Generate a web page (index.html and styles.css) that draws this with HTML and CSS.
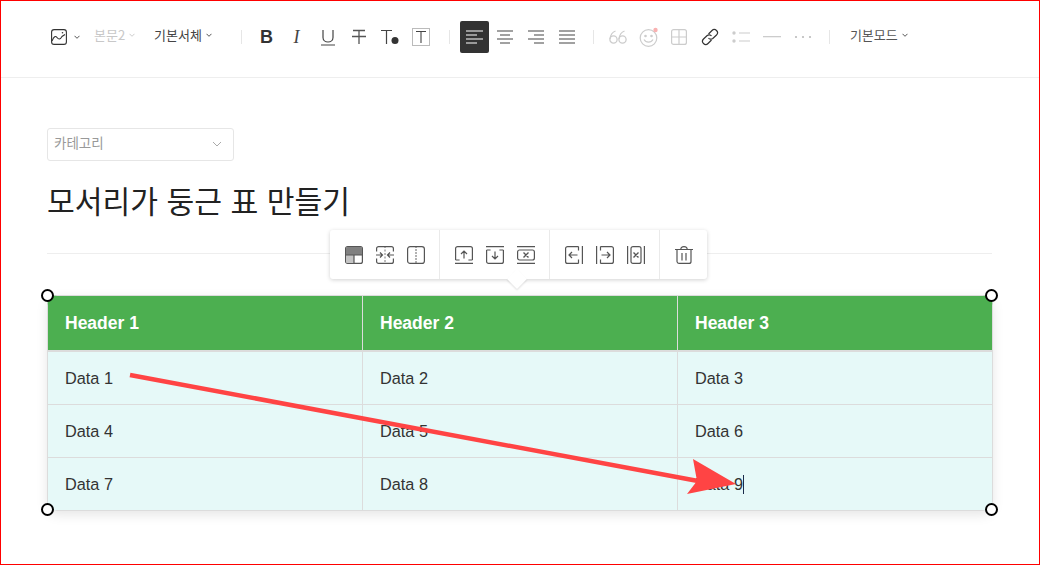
FILE: index.html
```html
<!DOCTYPE html>
<html lang="ko">
<head>
<meta charset="utf-8">
<title>모서리가 둥근 표 만들기</title>
<link rel="stylesheet" href="styles.css">
</head>
<body>
<div class="frame">
  <header class="toolbar">
    <div class="tb-image">
      <svg class="ic" width="16" height="16" viewBox="0 0 16 16" fill="none" stroke="#333" stroke-width="1.1"><rect x=".6" y=".6" width="14.8" height="14.8" rx="2.5"/><path d="M1 12c2-4.500 3.500-5.500 5-3.500s3 2.500 5-1l3-2"/><circle cx="11.500" cy="3.800" r=".8" fill="#333" stroke="none"/></svg>
      <svg class="chev" viewBox="0 0 6 4"><path d="M.5.800 3 3.300 5.500.800"/></svg>
    </div>
    <div class="tb-text muted">본문2<svg class="chev" viewBox="0 0 6 4"><path d="M.5.800 3 3.300 5.500.800"/></svg></div>
    <div class="tb-text font">기본서체<svg class="chev" viewBox="0 0 6 4"><path d="M.5.800 3 3.300 5.500.800"/></svg></div>
    <span class="sep sep-a"></span>
    <div class="tb-group format">
      <span class="btn bold"><b class="glyph-b">B</b></span>
      <span class="btn"><i class="glyph-i">I</i></span>
      <span class="btn"><svg width="16" height="18" viewBox="0 0 16 18" fill="none" stroke="#444" stroke-width="1.200"><path d="M3 2v7.500c0 6 10 6 10 0V2M1 17h14"/></svg></span>
      <span class="btn"><svg width="16" height="18" viewBox="0 0 16 18" fill="none" stroke="#555" stroke-width="1.300"><path d="M2 2.500h12M1 8.500h14M8 2.500V16"/></svg></span>
      <span class="btn"><svg width="20" height="18" viewBox="0 0 20 18" fill="none" stroke="#444" stroke-width="1.200"><path d="M1 2.500h11M6.500 2.500V16"/><circle cx="15" cy="12.500" r="3.500" fill="#333" stroke="none"/></svg></span>
      <span class="btn"><svg width="18" height="18" viewBox="0 0 18 18" fill="none"><rect x=".5" y=".5" width="17" height="17" stroke="#bbb"/><path d="M4 3.500h10M9 3.500V15" stroke="#444" stroke-width="1.100"/></svg></span>
    </div>
    <span class="sep sep-b"></span>
    <div class="tb-group align">
      <span class="btn active"><svg width="18" height="14" viewBox="0 0 18 14" stroke="#fff" stroke-width="1.200"><path d="M0 1h17M0 5h11M0 9h17M0 13h11"/></svg></span>
      <span class="btn"><svg width="18" height="14" viewBox="0 0 18 14" stroke="#444" stroke-width="1.200"><path d="M1 1h16M4 5h10M1 9h16M4 13h10"/></svg></span>
      <span class="btn"><svg width="18" height="14" viewBox="0 0 18 14" stroke="#444" stroke-width="1.200"><path d="M1 1h16M7 5h10M1 9h16M7 13h10"/></svg></span>
      <span class="btn"><svg width="18" height="14" viewBox="0 0 18 14" stroke="#444" stroke-width="1.200"><path d="M1 1h16M1 5h16M1 9h16M1 13h16"/></svg></span>
    </div>
    <span class="sep sep-c"></span>
    <div class="tb-group insert">
      <span class="btn"><svg width="18" height="14" viewBox="0 0 18 14" fill="none" stroke="#ccc" stroke-width="1.300"><circle cx="4.500" cy="9.500" r="3.600"/><path d="M1 9C1.500 5 3.500 2 6.500 1"/><circle cx="13.500" cy="9.500" r="3.600"/><path d="M10 9c.5-4 2.500-7 5.500-8"/></svg></span>
      <span class="btn"><svg width="20" height="20" viewBox="0 0 20 20" fill="none" stroke="#ccc" stroke-width="1.200"><circle cx="9.500" cy="11" r="8.300"/><path d="M5 12.500c2 3.500 7 3.500 9 0"/><circle cx="6.500" cy="9" r=".7" fill="#bbb"/><circle cx="12.500" cy="9" r=".7" fill="#bbb"/><circle cx="16.500" cy="3" r="2.200" fill="#f9b1b1" stroke="none"/></svg></span>
      <span class="btn"><svg width="16" height="16" viewBox="0 0 16 16" fill="none" stroke="#ccc" stroke-width="1.200"><rect x=".6" y=".6" width="14.800" height="14.800" rx="2"/><path d="M8 .6v14.800M.6 8h14.800"/></svg></span>
      <span class="btn"><svg width="18" height="18" viewBox="0 0 18 18" fill="none" stroke="#333" stroke-width="1.200"><path d="M7.500 6 11 2.500a3 3 0 0 1 4.500 4.500L11.800 10.500a3 3 0 0 1-4.300-.5"/><path d="M10.500 12 7 15.500A3 3 0 0 1 2.500 11L6.200 7.500a3 3 0 0 1 4.300.5"/></svg></span>
      <span class="btn"><svg width="18" height="12" viewBox="0 0 18 12" fill="#ccc"><circle cx="2" cy="2" r="1.700"/><circle cx="2" cy="10" r="1.700"/><path d="M7 1.500h11v1.100H7zM7 9.500h11v1.100H7z"/></svg></span>
      <span class="btn"><svg width="18" height="2" viewBox="0 0 18 2"><path d="M0 0h18v1.300H0z" fill="#ccc"/></svg></span>
      <span class="btn"><svg width="18" height="4" viewBox="0 0 18 4" fill="#bbb"><circle cx="2" cy="2" r="1.100"/><circle cx="9" cy="2" r="1.100"/><circle cx="16" cy="2" r="1.100"/></svg></span>
    </div>
    <span class="sep sep-d"></span>
    <div class="tb-text mode">기본모드<svg class="chev" viewBox="0 0 6 4"><path d="M.5.800 3 3.300 5.500.800"/></svg></div>
  </header>

  <main class="doc">
    <div class="category"><span>카테고리</span><svg class="cat-chev" width="10" height="6" viewBox="0 0 10 6" fill="none" stroke="#aaa"><path d="M1 1l4 4 4-4"/></svg></div>
    <h1 class="title">모서리가 둥근 표 만들기</h1>
    <hr class="rule">
    <div class="table-wrap">
      <table class="grid">
        <thead><tr><th class="col-first">Header 1</th><th>Header 2</th><th>Header 3</th></tr></thead>
        <tbody>
          <tr><td>Data 1</td><td>Data 2</td><td>Data 3</td></tr>
          <tr><td>Data 4</td><td>Data 5</td><td>Data 6</td></tr>
          <tr><td>Data 7</td><td>Data 8</td><td>Data 9<span class="caret"></span></td></tr>
        </tbody>
      </table>
      <span class="handle tl"></span><span class="handle tr"></span><span class="handle bl"></span><span class="handle br"></span>
    </div>

    <div class="popover">
      <div class="pop-group">
        <span class="pbtn"><svg width="18" height="18" viewBox="0 0 18 18"><rect x=".6" y=".6" width="16.800" height="16.800" rx="2" fill="#fff" stroke="#555" stroke-width="1.200"/><path d="M1 2.500a1.500 1.500 0 0 1 1.500-1.500h13a1.500 1.500 0 0 1 1.500 1.500V9H1z" fill="#808080"/><path d="M1 9h8v8H2.500A1.500 1.500 0 0 1 1 15.500z" fill="#c4c4c4"/><path d="M1 9h16M9 9v8" stroke="#555" stroke-width="1.200" fill="none"/></svg></span>
        <span class="pbtn"><svg width="18" height="18" viewBox="0 0 18 18" fill="none" stroke="#555" stroke-width="1.200"><path d="M.6 5.500V2.600a2 2 0 0 1 2-2h12.800a2 2 0 0 1 2 2v2.900M.6 12.500v2.900a2 2 0 0 0 2 2h12.800a2 2 0 0 0 2-2v-2.900"/><path d="M9 0v18" stroke-dasharray="2 1.500" stroke-width=".8"/><path d="M0 9h6.500M4 6.500 6.500 9 4 11.500M18 9h-6.500M14 6.500 11.500 9l2.500 2.500"/></svg></span>
        <span class="pbtn"><svg width="18" height="18" viewBox="0 0 18 18" fill="none" stroke="#555" stroke-width="1.200"><rect x=".6" y=".6" width="16.800" height="16.800" rx="2.500"/><path d="M9 0v18" stroke-dasharray="2 1" stroke-width=".9"/></svg></span>
      </div>
      <div class="pop-group">
        <span class="pbtn"><svg width="18" height="18" viewBox="0 0 18 18" fill="none" stroke="#555" stroke-width="1.200"><path d="M.6 14V2.600a2 2 0 0 1 2-2h12.800a2 2 0 0 1 2 2V14M.6 14h4M17.400 14h-4M0 17.400h18M9 12.500V5M6 8l3-3 3 3"/></svg></span>
        <span class="pbtn"><svg width="18" height="18" viewBox="0 0 18 18" fill="none" stroke="#555" stroke-width="1.200"><path d="M.6 4v11.400a2 2 0 0 0 2 2h12.800a2 2 0 0 0 2-2V4M.6 4h4M17.400 4h-4M0 .6h18M9 5.500V13M6 10l3 3 3-3"/></svg></span>
        <span class="pbtn"><svg width="18" height="18" viewBox="0 0 18 18" fill="none" stroke="#555" stroke-width="1.200"><path d="M0 .6h18M0 17.400h18"/><rect x=".6" y="4" width="16.800" height="10" rx="2"/><path d="M6.500 6.500l5 5M11.500 6.500l-5 5" stroke-width="1.400"/></svg></span>
      </div>
      <div class="pop-group">
        <span class="pbtn"><svg width="18" height="18" viewBox="0 0 18 18" fill="none" stroke="#555" stroke-width="1.200"><path d="M13.500.6H2.600a2 2 0 0 0-2 2v12.800a2 2 0 0 0 2 2h10.900M13.500.6v4M13.500 17.400v-4M17.400 0v18M12.500 9H4M7 6 4 9l3 3"/></svg></span>
        <span class="pbtn"><svg width="18" height="18" viewBox="0 0 18 18" fill="none" stroke="#555" stroke-width="1.200"><path d="M4.500.6h10.900a2 2 0 0 1 2 2v12.800a2 2 0 0 1-2 2H4.500M4.500.6v4M4.500 17.400v-4M.6 0v18M5.500 9H14M11 6l3 3-3 3"/></svg></span>
        <span class="pbtn"><svg width="18" height="18" viewBox="0 0 18 18" fill="none" stroke="#555" stroke-width="1.200"><path d="M.6 0v18M17.400 0v18"/><rect x="4" y=".6" width="10" height="16.800" rx="2"/><path d="M6.500 6.500l5 5M11.500 6.500l-5 5" stroke-width="1.400"/></svg></span>
      </div>
      <div class="pop-group">
        <span class="pbtn"><svg width="18" height="18" viewBox="0 0 18 18" fill="none" stroke="#555" stroke-width="1.200"><path d="M0 3.500h18M5.800 3.500C5.800 1.500 7 .6 9 .6s3.200.9 3.200 2.900M2 3.500v12A2 2 0 0 0 4 17.400h10a2 2 0 0 0 2-2v-12M7 7v7.500M11 7v7.500"/></svg></span>
      </div>
      <span class="pop-tail"></span>
    </div>

    <svg class="arrow" width="1040" height="565" viewBox="0 0 1040 565"><path d="M130 375 698 481" stroke="#ff4444" stroke-width="4.500" fill="none"/><path d="M736 484 693 459 697 481 687 494z" fill="#ff4444"/></svg>
  </main>
</div>
</body>
</html>
```
FILE: styles.css
```css
* { box-sizing: border-box; }
html, body { margin: 0; height: 100%; }
body { background: #fff; font-family: "Liberation Sans", "Noto Sans CJK KR", sans-serif; color: #333; overflow: hidden; }

.frame { position: relative; width: 1040px; height: 565px; border: 1px solid #f00; overflow: hidden; }

.toolbar { display: flex; align-items: center; height: 77px; padding: 0 0 4px 50px; border-bottom: 1px solid #eee; font-family: "Noto Sans CJK KR", sans-serif; font-size: 13px; }
.tb-image { display: flex; align-items: center; gap: 3px; width: 43px; }
.chev { width: 6px; height: 4px; margin-left: 4px; fill: none; stroke: #555; stroke-width: 1; flex: none; }
.tb-text { display: flex; align-items: center; white-space: nowrap; line-height: 18px; margin-bottom: 4px; }
.tb-text.muted { color: #c8c8c8; width: 60px; }
.tb-text.muted .chev { stroke: #ccc; }
.tb-text.font { color: #444; width: 87px; }
.tb-text.mode { color: #555; margin-left: 20px; }
.sep { flex: none; width: 1px; height: 14px; background: #e6e6e6; }
.sep-b { margin-left: 13px; }
.sep-c { margin-left: 11px; }
.sep-d { margin-left: 10.800px; }
.tb-group { display: flex; align-items: center; }
.tb-group .btn { display: flex; align-items: center; justify-content: center; width: 31px; height: 32px; flex: none; }
.tb-group.format { margin-left: 10px; }
.tb-group.format .btn.bold { width: 29px; }
.tb-group.align { margin-left: 10px; }
.tb-group.insert { margin-left: 8.500px; }
.tb-group.insert .btn { width: 30.800px; }
.tb-group .btn.active { background: #333; border-radius: 2px; width: 29px; }
.glyph-b { font: bold 18px "Liberation Sans", sans-serif; color: #333; }
.glyph-i { font: italic 18px "Liberation Serif", serif; color: #444; }

.doc { padding: 50px 47px 0 46px; }
.category { display: flex; align-items: center; justify-content: space-between; width: 187px; height: 33px; padding: 0 11px 6px 6px; border: 1px solid #e6e6e6; border-radius: 3px; font: 13.500px "Noto Sans CJK KR", sans-serif; color: #999; }
.cat-chev { margin-top: 5px; }
.title { margin: 18px 0 0; font: 400 30.200px/42px "Noto Sans CJK KR", sans-serif; color: #222; }
.rule { margin: 32px 0 41px; border: 0; border-top: 1px solid #eee; }

.table-wrap { position: relative; width: 946px; }
.grid { width: 100%; table-layout: fixed; border-collapse: separate; border-spacing: 0; border-radius: 10px; overflow: hidden; box-shadow: 0 4px 12px rgba(0,0,0,.1); background: #e6f9f8; }
.grid th { height: 57px; padding: 0 17px; background: #4caf50; color: #fff; font-size: 17.500px; font-weight: 700; text-align: left; border-top: 1px solid #dcdcdc; border-right: 1px solid #dcdcdc; border-bottom: 2px solid #dcdcdc; }
.grid th.col-first { width: 316px; }
.grid td { height: 53px; padding: 0 17px; font-size: 16.300px; color: #333; border-right: 1px solid #dcdcdc; border-bottom: 1px solid #dcdcdc; }
.grid td:first-child, .grid th:first-child { border-left: 1px solid #dcdcdc; }
.caret { display: inline-block; width: 1px; height: 19px; background: #1a2a4a; vertical-align: -4px; }
.handle { position: absolute; width: 13px; height: 13px; background: #fff; border: 2px solid #000; border-radius: 50%; }
.handle.tl { left: -6px; top: -6px; }
.handle.tr { right: -5px; top: -6px; }
.handle.bl { left: -6px; bottom: -5px; }
.handle.br { right: -5px; bottom: -5px; }

.popover { position: absolute; left: 329px; top: 229px; display: flex; height: 49px; background: #fff; border-radius: 3px; box-shadow: 0 1px 4px rgba(0,0,0,.18); }
.pop-group { display: flex; align-items: center; padding: 0 8px; border-left: 1px solid #eaeaea; }
.pop-group:first-child { border-left: 0; }
.pbtn { display: flex; align-items: center; justify-content: center; width: 31px; height: 49px; }
.pop-tail { position: absolute; left: 180px; bottom: -7px; width: 14px; height: 14px; background: #fff; transform: rotate(45deg); box-shadow: 1px 1px 2px rgba(0,0,0,.12); }
.arrow { position: absolute; left: -1px; top: -1px; pointer-events: none; }
```
